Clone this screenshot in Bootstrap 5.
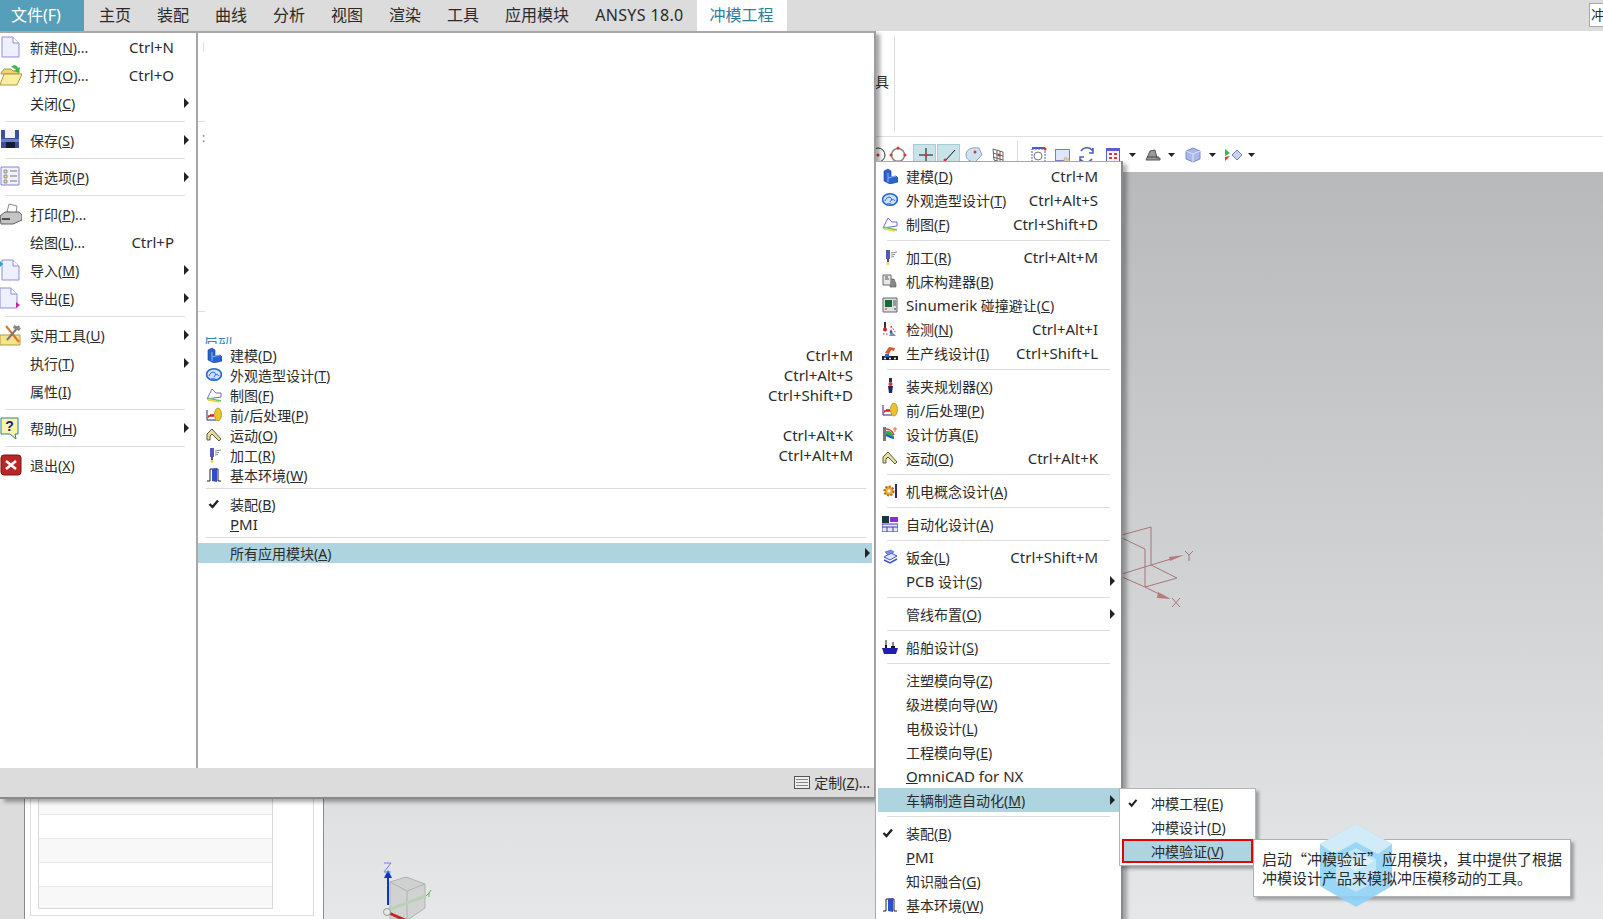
<!DOCTYPE html>
<html lang="zh-CN">
  <head>
    <meta charset="UTF-8" />
    <meta name="viewport" content="width=device-width, initial-scale=1.0" />
    <title>NX 冲模工程</title>
    <link href="https://cdn.jsdelivr.net/npm/bootstrap@5.3.3/dist/css/bootstrap.min.css" rel="stylesheet" />
    <style>
      html, body { height: 919px; overflow: hidden; }
      body { font-family: "Noto Sans", "Noto Sans CJK SC", sans-serif; font-size: 14px; color: #2b2b2b; background: #fff; }
      u { text-underline-offset: 1px; }
      .lat { font-size: 15px; }

      .app-shell { width: 1603px; height: 919px; position: relative; overflow: hidden; }
      .tabbar { height: 31px; background: #dcdcdc; font-size: 16px; line-height: 30px; padding-right: 0; }
      .tab-file { width: 84px; margin-right: 2px; padding-left: 11px; background: #559fba; color: #fff; }
      .tab-item { padding: 0 13px; }
      .tab-item.is-on { background: #fff; color: #2f7f9c; }
      .tab-ansys { letter-spacing: .35px; }
      .tab-corner { width: 14px; height: 24px; margin-top: 3px; background: #fff; border: 1px solid #a9a9a9; border-right: 0; font-size: 14px; line-height: 22px; overflow: hidden; padding-left: 1px; }
      .ribbon { height: 106px; border-bottom: 1px solid #dedede; padding-left: 875px; }
      .ribbon-txt { width: 19px; padding-top: 40px; font-size: 14px; }
      .ribbon-div { width: 1px; height: 96px; margin-top: 5px; background: #dcdcdc; }
      .toolstrip { height: 35px; padding-left: 866px; }
      .work { height: 747px; }
      .nav-gutter { width: 25px; background: #dcdcdc; border-right: 1px solid #8c8c8c; }
      .nav-pane { width: 299px; border-right: 1px solid #8c8c8c; padding: 0 9px 3px 5px; }
      .nav-box { border: 1px solid #dcdcdc; padding: 0 40px 6px 7px; }
      .nav-table { border: 1px solid #d8d8d8; }
      .nav-rowa { height: 24px; background: #f8f8f8; border-bottom: 1px solid #e8e8e8; }
      .nav-rowb { height: 24px; background: #fff; border-bottom: 1px solid #e8e8e8; }
      .nav-rowz { height: 21px; background: #f8f8f8; }
      .gfx { background: linear-gradient(180deg, #b8b9bb 0%, #e6e7e9 100%); }

      .file-panel { position: absolute; left: 0; top: 31px; width: 876px; height: 768px; background: #fff; border-top: 2px solid #a8a8a8; border-right: 2px solid #9c9c9c; border-bottom: 2px solid #8a8a8a; box-shadow: 4px 3px 4px rgba(0,0,0,.35); }
      .file-left { width: 198px; border-right: 2px solid #a8a8a8; }
      .file-right { padding: 0 2px 0 0; }
      .stub-wrap { height: 312px; display: flow-root; }
      .stub-a { width: 1px; height: 10px; margin: 9px 0 0 5px; background: #e8e2d4; }
      .stub-b { width: 7px; height: 1px; margin-top: 69px; background: #dedede; }
      .stub-c { height: 20px; margin: 6px 0 0 4px; font-size: 12px; line-height: 20px; color: #777; }
      .stub-d { width: 7px; height: 1px; margin-top: 163px; background: #dedede; }
      .stub-e { height: 7px; margin: 25px 0 0 6px; overflow: hidden; color: #2f86c5; font-size: 14px; line-height: 9px; }
      .stub-e span { display: block; margin-top: -2px; }
      .panel-foot { height: 29px; background: #dcdcdc; padding-right: 4px; }
      .foot-ico { width: 16px; height: 13px; margin-right: 4px; }

      .mrow { white-space: nowrap; }
      .islot { flex: none; }
      .islot svg { display: block; }
      .hot { margin-left: auto; font-size: 15px; }
      .arw { margin-left: auto; width: 0; height: 0; border-left: 5px solid #222; border-top: 5px solid transparent; border-bottom: 5px solid transparent; }
      .msep { height: 1px; background: #dcdcdc; }
      .sel-band { background: #aed4df; }

      .left-menu .mrow { height: 28px; }
      .left-menu .islot { width: 30px; }
      .left-menu .hot { margin-right: 22px; }
      .left-menu .arw { margin-right: 7px; }
      .left-menu .msep { margin: 4px 11px 4px 5px; }

      .mid-menu .mrow { height: 20px; padding-left: 8px; }
      .mid-menu .islot { width: 24px; }
      .mid-menu .hot { margin-right: 19px; }
      .mid-menu .arw { margin-right: 2px; }
      .mid-menu .msep { margin: 3px 6px 0 8px; }
      .mid-menu .gap-top { margin-top: 5px; }

      .sub-menu { position: absolute; left: 875px; top: 161px; width: 248px; height: 770px; background: #fff; border: 1px solid #a8a8a8; border-right: 2px solid #8a8a8a; box-shadow: 4px 3px 4px rgba(0,0,0,.3); padding: 2px 2px 0 2px; }
      .sub-menu .mrow { height: 24px; padding-left: 4px; }
      .sub-menu .islot { width: 24px; }
      .sub-menu .hot { margin-right: 21px; }
      .sub-menu .arw { margin-right: 4px; }
      .sub-menu .msep { margin: 4px 9px 4px 9px; }
      .sub-menu .islot .tick { margin-left: -2px; }

      .fly-menu { position: absolute; left: 1119px; top: 788px; width: 137px; height: 78px; background: #fff; border: 1px solid #b4b4b4; box-shadow: 3px 3px 3px rgba(0,0,0,.3); padding: 2px 2px 0 2px; }
      .fly-menu .mrow { height: 24px; padding-left: 7px; }
      .fly-menu .islot { width: 22px; }
      .fly-menu .tick { margin-left: -3px; }
      .fly-pick { height: 24px !important; padding-left: 5px !important; border: 2px solid #e60000; background: #aed4df; }
      .tip-box { position: absolute; left: 1253px; top: 839px; width: 318px; height: 58px; background: #fff; border: 1px solid #b0b0b0; box-shadow: 3px 3px 3px rgba(0,0,0,.3); padding: 9px 0 0 8px; font-family: "Noto Sans CJK SC", sans-serif; font-size: 15px; line-height: 19px; white-space: nowrap; }
      .tip-text { position: relative; z-index: 3; }
      .hex-mark { position: absolute; z-index: 2; left: 1318px; top: 824px; width: 76px; height: 83px; pointer-events: none; }
      .axes-a { position: absolute; left: 1122px; top: 520px; width: 90px; height: 100px; }
      .axes-b { position: absolute; left: 375px; top: 855px; width: 60px; height: 64px; }
    </style>
  </head>
  <body>
    <svg width="0" height="0" class="d-none">
      <defs>
        <symbol id="i-doc" viewBox="0 0 22 22"><path d="M2 1h11l6 6v14H2z" fill="#eef0fd" stroke="#8d8de0"/><path d="M13 1v6h6" fill="#fff" stroke="#8d8de0"/></symbol>
        <symbol id="i-open" viewBox="0 0 22 22"><path d="M1 9l3-4h7l2 2h6v3H1z" fill="#e8d67a" stroke="#b09a3a"/><path d="M0 21l4-11h18l-5 11z" fill="#fbeea0" stroke="#b09a3a"/><path d="M11 3c3-3 6-2 7 1l2-1-1 6-5-2 2-1c-1-2-3-2-5-3z" fill="#3bb54a"/></symbol>
        <symbol id="i-save" viewBox="0 0 22 22"><path d="M1 1h18v18H1z" fill="#3d4f9c"/><path d="M5 1h10v8H5z" fill="#f2f2f8"/><path d="M6 13h9v6H6z" fill="#151a35"/><path d="M1 10h18v3H1z" fill="#6d80cc"/></symbol>
        <symbol id="i-pref" viewBox="0 0 22 22"><path d="M1 1h18v18H1z" fill="#f1f1fd" stroke="#8484d8"/><path d="M4 4h3v3H4zM4 9h3v3H4zM4 14h3v3H4z" fill="#f4e35a" stroke="#6a6ab0" stroke-width=".7"/><path d="M10 5h7M10 10h7M10 15h7" stroke="#777"/></symbol>
        <symbol id="i-print" viewBox="0 0 22 22"><path d="M7 9l2-8 8 2-1 7z" fill="#fff" stroke="#888"/><path d="M0 13l5-4h14l3 3v5l-9 4H1z" fill="#c4c4c4" stroke="#5f5f5f"/><path d="M2 15h8v2H2z" fill="#4d4d4d"/></symbol>
        <symbol id="i-imp" viewBox="0 0 22 22"><path d="M2 1h11l6 6v14H2z" fill="#eef0fd" stroke="#8d8de0"/><path d="M13 1v6h6" fill="#fff" stroke="#8d8de0"/><path d="M0 2l3 3-3 3z" fill="#2aa6c6"/></symbol>
        <symbol id="i-exp" viewBox="0 0 22 22"><path d="M0 1h11l6 6v14H0z" fill="#eef0fd" stroke="#8d8de0"/><path d="M11 1v6h6" fill="#fff" stroke="#8d8de0"/><path d="M16 15l4 3-4 3z" fill="#c2249c"/></symbol>
        <symbol id="i-tools" viewBox="0 0 22 22"><path d="M0 11h20v10H0z" fill="#f6e48a" stroke="#b59c3c"/><path d="M6 2l13 16" stroke="#d9702c" stroke-width="2"/><path d="M19 2L7 16" stroke="#777" stroke-width="2"/><path d="M14 1l7 3-2 3-6-3z" fill="#888"/></symbol>
        <symbol id="i-help" viewBox="0 0 22 22"><path d="M1 1h17v16h-3l1 5-6-5H1z" fill="#fdf8a8" stroke="#2b7f9e"/><text x="9.500" y="14" text-anchor="middle" font-family="Liberation Sans" font-weight="700" font-size="14" fill="#14149a">?</text></symbol>
        <symbol id="i-exit" viewBox="0 0 22 22"><rect x="1" y="1" width="20" height="20" rx="3" fill="#b92626" stroke="#7d1515"/><path d="M6 7l10 8M16 7L6 15" stroke="#fff" stroke-width="2.600"/></symbol>
        <symbol id="i-model" viewBox="0 0 16 16"><path d="M2 3l4-2 3 2v6l5-1 2 2v4l-8 2-6-3z" fill="#2a62cf" stroke="#163d92" stroke-width=".6"/><path d="M6 5v9M6 10l8-2" stroke="#8db4f3"/></symbol>
        <symbol id="i-shape" viewBox="0 0 16 16"><ellipse cx="8" cy="7.500" rx="7.400" ry="5.800" fill="#cfe0fb" stroke="#2464d8" stroke-width="1.600"/><path d="M3 9c2-5 6-5 7-1M8 10c1-3 4-3 5-1M5 12c2-1 4 0 6 1" fill="none" stroke="#2464d8"/></symbol>
        <symbol id="i-draft" viewBox="0 0 16 16"><path d="M1 12L6 2l4 4h5v4z" fill="#fff" stroke="#6a6ad8"/><path d="M1 11l14 3" stroke="#6fc16a" stroke-width="1.600"/><path d="M2 13l11 2" stroke="#e9d33f" stroke-width="1.400"/></symbol>
        <symbol id="i-post" viewBox="0 0 16 16"><path d="M1 3v10h9" fill="none" stroke="#22228a"/><path d="M2 11l1-3 1 2 1-3 1 3 1-3 1 3" fill="none" stroke="#d62222"/><ellipse cx="12" cy="7.500" rx="3.500" ry="6.500" fill="#edc32a" stroke="#8f741a" stroke-width=".6"/></symbol>
        <symbol id="i-motion" viewBox="0 0 16 16"><path d="M1 13V7l5-5 9 10-2 2-7-7-2 2v4z" fill="#e6dca0" stroke="#5f5a3a"/></symbol>
        <symbol id="i-mfg" viewBox="0 0 16 16"><path d="M4 1h4v9H4z" fill="#5858b8"/><path d="M5 10h2v3H5z" fill="#555"/><path d="M9 4l6-1M9 6l4-.5M9 8l3-.5" stroke="#8a8a8a"/><circle cx="6" cy="14.500" r="1.500" fill="#f1d34a"/></symbol>
        <symbol id="i-gate" viewBox="0 0 16 16"><path d="M1 14h3V2h8v12h3" fill="none" stroke="#222"/><path d="M6 2l5-1v14l-5-1z" fill="#2f4ec8"/></symbol>
        <symbol id="i-mach" viewBox="0 0 16 16"><path d="M1 2h8v10H1z" fill="#e8e8e8" stroke="#666"/><path d="M9 6h3l2 5v3H8v-2" fill="#888" stroke="#555" stroke-width=".6"/><path d="M3 4h3M3 6h4" stroke="#555"/></symbol>
        <symbol id="i-sinu" viewBox="0 0 16 16"><path d="M1 1h14v14H1z" fill="#dedede" stroke="#666"/><path d="M3 3h7v7H3z" fill="#176b38"/><path d="M11 4h3M11 6h3M11 8h3" stroke="#555"/><path d="M3 12h2" stroke="#c33"/><path d="M12 12h2" stroke="#333"/></symbol>
        <symbol id="i-insp" viewBox="0 0 16 16"><path d="M3 1v6" stroke="#333" stroke-width="2"/><circle cx="3" cy="8.500" r="2" fill="#d82020"/><path d="M1 13h6M9 13V5M9 5l5 7" stroke="#d82020" stroke-dasharray="1.500 1.500" fill="none"/><path d="M7 15l3-4 4 4z" fill="#8a8a9c"/><circle cx="9" cy="11" r="1.400" fill="#2464d8"/></symbol>
        <symbol id="i-line" viewBox="0 0 16 16"><path d="M3 8l4-6 6 1-1 3-3-1-2 4z" fill="#d4572a"/><path d="M0 11h16v4H0z" fill="#1d1d1d"/><path d="M3 9h4v3H3z" fill="#2464d8"/><circle cx="3" cy="13.500" r="1" fill="#fff"/><circle cx="8" cy="13.500" r="1" fill="#fff"/><circle cx="13" cy="13.500" r="1" fill="#fff"/></symbol>
        <symbol id="i-fix" viewBox="0 0 16 16"><path d="M7 0h3v4H7z" fill="#333"/><circle cx="8.500" cy="6" r="2" fill="#c33"/><path d="M6 8h5l-1 7H7z" fill="#23235e"/></symbol>
        <symbol id="i-sim" viewBox="0 0 16 16"><path d="M1 1h3v14H1z" fill="#777"/><path d="M4 5c4-1 7 2 8 6-3 1-6-1-8-2z" fill="#2cb24a"/><path d="M4 3c4 0 7 3 8 6" fill="none" stroke="#e23030" stroke-width="1.500"/><path d="M4 9c3 1 5 3 8 3" fill="none" stroke="#2a52d8" stroke-width="2"/><path d="M13 1v5M11 3h4" stroke="#ea6a1a"/></symbol>
        <symbol id="i-mech" viewBox="0 0 16 16"><circle cx="7" cy="8" r="4.500" fill="#edaa3a" stroke="#b66b12" stroke-width="2.200" stroke-dasharray="2 1.400"/><circle cx="7" cy="8" r="1.600" fill="#fff"/><path d="M14 1v14" stroke="#2b2b70" stroke-width="2"/></symbol>
        <symbol id="i-auto" viewBox="0 0 16 16"><path d="M0 0h7v7H0z" fill="#17343f"/><path d="M8 1h8v5H8z" fill="#8a2ad8"/><path d="M0 8h16v8H0z" fill="#e6e6fa" stroke="#3d3daa"/><path d="M0 11h16M5 11v5M11 11v5" stroke="#3d3daa"/></symbol>
        <symbol id="i-sheet" viewBox="0 0 16 16"><path d="M2 8l7-4 6 3-7 4z" fill="#dde4fb" stroke="#3a4fc8"/><path d="M2 11l6 3 7-4" fill="none" stroke="#3a4fc8" stroke-width="1.500"/><path d="M3 3l6-2 3 2-6 3z" fill="#7d90e6" stroke="#3a4fc8" stroke-width=".6"/></symbol>
        <symbol id="i-ship" viewBox="0 0 16 16"><path d="M0 9h16l-2 6H2z" fill="#2020a8"/><path d="M3 6h2v3H3zM9 7h4v2H9z" fill="#1a1a1a"/><path d="M4 1v5M11 3v4" stroke="#1a1a1a"/></symbol>
        <symbol id="i-chk" viewBox="0 0 16 16"><path d="M3.500 8l3 3 5.500-6.500" fill="none" stroke="#222" stroke-width="2.400"/></symbol>
      </defs>
    </svg>

    <div class="app-shell">
      <div class="tabbar d-flex">
        <div class="tab-file">文件(F)</div>
        <div class="tab-item">主页</div>
        <div class="tab-item">装配</div>
        <div class="tab-item">曲线</div>
        <div class="tab-item">分析</div>
        <div class="tab-item">视图</div>
        <div class="tab-item">渲染</div>
        <div class="tab-item">工具</div>
        <div class="tab-item">应用模块</div>
        <div class="tab-item tab-ansys">ANSYS 18.0</div>
        <div class="tab-item is-on">冲模工程</div>
        <div class="tab-corner ms-auto">冲</div>
      </div>

      <div class="ribbon d-flex">
        <div class="ribbon-txt">具</div>
        <div class="ribbon-div"></div>
      </div>

      <div class="toolstrip">
        <svg width="400" height="35" viewBox="866 137 400 35" fill="none">
          <circle cx="878" cy="155" r="7" stroke="#333"/><circle cx="878" cy="155" r="1.500" fill="#d33"/>
          <circle cx="898" cy="155" r="6.500" stroke="#888" stroke-width="1.500"/><circle cx="898" cy="148" r="1.500" fill="#d33"/><circle cx="891" cy="155" r="1.500" fill="#d33"/><circle cx="905" cy="155" r="1.500" fill="#d33"/><circle cx="898" cy="162" r="1.500" fill="#d33"/>
          <rect x="913.500" y="144.500" width="22" height="24" fill="#c9e3e9" stroke="#a5ced8"/><path d="M919 155h14M926 148v14" stroke="#111"/><circle cx="926" cy="155" r="1.500" fill="#d33"/>
          <rect x="937.500" y="144.500" width="22" height="24" fill="#c9e3e9" stroke="#a5ced8"/><path d="M945 161l10-11" stroke="#111"/><circle cx="945" cy="160" r="1.500" fill="#d33"/>
          <path d="M966 155c0-6 6-8 13-7l3 7-7 7c-5 0-9-3-9-7z" fill="#cfe2f2" stroke="#8fa6b8"/><circle cx="975" cy="152" r="1.500" fill="#d33"/>
          <path d="M993 149l10 3v11l-9-3zM993 153l10 3M993 157l10 3M997 150v11M1000 151v11" stroke="#444" stroke-width=".8"/><circle cx="999" cy="155" r="1.500" fill="#d33"/>
          <path d="M1017.500 141v26" stroke="#dcdcdc"/>
          <rect x="1032" y="149" width="13" height="13" stroke="#4a5cd0" stroke-dasharray="2 1"/><rect x="1032" y="147" width="13" height="2" fill="#4a5cd0"/><circle cx="1038" cy="156" r="4" stroke="#777"/><circle cx="1045" cy="149" r="1.500" fill="#d33"/>
          <rect x="1055.500" y="149.500" width="14" height="11" fill="#dfe6f5" stroke="#7484c8"/><path d="M1063 163l2-6 4 2 1 4z" fill="#e8c9a0" stroke="#c4a070" stroke-width=".5"/>
          <path d="M1081 151a7 7 0 0 1 11-1l1-2v5h-4M1092 159a7 7 0 0 1-11 1l-1 2v-5h4" stroke="#4a5fb8" stroke-width="1.500"/>
          <rect x="1106.500" y="148.500" width="13" height="13" fill="#f2f2ff" stroke="#5c5cd0"/><rect x="1106" y="148" width="14" height="3" fill="#5c5cd0"/><path d="M1109 153h3v2h-3zM1114 153h3v2h-3zM1109 157h3v2h-3zM1114 157h3v2h-3z" fill="#d33"/>
          <path d="M1129 153h7l-3.500 4z" fill="#222"/>
          <path d="M1146 160l4-9 5-1 2 8h3v2z" fill="#999" stroke="#555"/><path d="M1147 157h12" stroke="#444"/>
          <path d="M1168 153h7l-3.500 4z" fill="#222"/>
          <path d="M1186 151l7-3 7 3v8l-7 3-7-3z" fill="#a9b8ea" stroke="#7b8ccc"/><path d="M1186 151l7 3 7-3M1193 154v8" stroke="#dbe2f9"/>
          <path d="M1209 153h7l-3.500 4z" fill="#222"/>
          <path d="M1225 149l5 4-5 3z" fill="#3bb54a"/><path d="M1225 157l5-1-5 5z" fill="#d33"/><path d="M1232 155l5-5 5 5-5 5z" fill="#c9d2ef" stroke="#7080c0"/>
          <path d="M1248 153h7l-3.500 4z" fill="#222"/>
        </svg>
      </div>

      <div class="work d-flex">
        <div class="nav-gutter"></div>
        <div class="nav-pane d-flex flex-column justify-content-end">
          <div class="nav-box">
            <div class="nav-table">
              <div class="nav-rowa"></div>
              <div class="nav-rowb"></div>
              <div class="nav-rowa"></div>
              <div class="nav-rowb"></div>
              <div class="nav-rowz"></div>
            </div>
          </div>
        </div>
        <div class="gfx flex-grow-1"></div>
      </div>

      <svg class="axes-a" viewBox="1122 520 90 100" fill="none">
        <g stroke="#a87676" stroke-width="1">
          <path d="M1122 535l29-8v38M1122 538l23 11v38M1122 574l29-9 26 13-32 9-23-10"/>
          <path d="M1151 565l20-6M1145 587l16 8"/>
        </g>
        <path d="M1169 557l15-2-14 6z" fill="#b77a7a"/><path d="M1158 592l13 7-14-1z" fill="#b77a7a"/>
        <path d="M1185 551l4 4 4-4M1189 555v6M1172 598l8 9M1180 598l-8 9" stroke="#a87676"/>
      </svg>
      <svg class="axes-b" viewBox="375 855 60 64" fill="none">
        <path d="M390 882l16-5 19 7v24l-16 11h-19z" fill="#c8cac8" fill-opacity=".7" stroke="#b0b2b0"/><path d="M390 882l17 9 18-7M407 891v28" stroke="#b0b2b0"/>
        <path d="M388 910l38-14" stroke="#b8d2b8" stroke-width="3"/>
        <path d="M388 905v-30" stroke="#0c36c8" stroke-width="2"/><path d="M384 878l4-8 4 8z" fill="#0c36c8"/>
        <path d="M384 863h7l-7 9h7" stroke="#6a82e8"/>
        <path d="M426 896l3-3 2-3M429 893v4" stroke="#58b058"/>
        <path d="M389 913l18 8" stroke="#c62424" stroke-width="3"/><circle cx="387" cy="912" r="3.500" fill="#e8e8e8" stroke="#999"/>
      </svg>

      <!-- 文件菜单 -->
      <div class="file-panel d-flex flex-column">
        <div class="d-flex flex-grow-1">
          <div class="file-left left-menu">
            <div class="mrow d-flex align-items-center"><span class="islot"><svg width="22" height="22"><use href="#i-doc"/></svg></span>新建(<u>N</u>)...<span class="hot">Ctrl+N</span></div>
            <div class="mrow d-flex align-items-center"><span class="islot"><svg width="22" height="22"><use href="#i-open"/></svg></span>打开(<u>O</u>)...<span class="hot">Ctrl+O</span></div>
            <div class="mrow d-flex align-items-center"><span class="islot"></span>关闭(<u>C</u>)<i class="arw"></i></div>
            <div class="msep"></div>
            <div class="mrow d-flex align-items-center"><span class="islot"><svg width="22" height="22"><use href="#i-save"/></svg></span>保存(<u>S</u>)<i class="arw"></i></div>
            <div class="msep"></div>
            <div class="mrow d-flex align-items-center"><span class="islot"><svg width="22" height="22"><use href="#i-pref"/></svg></span>首选项(<u>P</u>)<i class="arw"></i></div>
            <div class="msep"></div>
            <div class="mrow d-flex align-items-center"><span class="islot"><svg width="22" height="22"><use href="#i-print"/></svg></span>打印(<u>P</u>)...</div>
            <div class="mrow d-flex align-items-center"><span class="islot"></span>绘图(<u>L</u>)...<span class="hot">Ctrl+P</span></div>
            <div class="mrow d-flex align-items-center"><span class="islot"><svg width="22" height="22"><use href="#i-imp"/></svg></span>导入(<u>M</u>)<i class="arw"></i></div>
            <div class="mrow d-flex align-items-center"><span class="islot"><svg width="22" height="22"><use href="#i-exp"/></svg></span>导出(<u>E</u>)<i class="arw"></i></div>
            <div class="msep"></div>
            <div class="mrow d-flex align-items-center"><span class="islot"><svg width="22" height="22"><use href="#i-tools"/></svg></span>实用工具(<u>U</u>)<i class="arw"></i></div>
            <div class="mrow d-flex align-items-center"><span class="islot"></span>执行(<u>T</u>)<i class="arw"></i></div>
            <div class="mrow d-flex align-items-center"><span class="islot"></span>属性(<u>I</u>)</div>
            <div class="msep"></div>
            <div class="mrow d-flex align-items-center"><span class="islot"><svg width="22" height="22"><use href="#i-help"/></svg></span>帮助(<u>H</u>)<i class="arw"></i></div>
            <div class="msep"></div>
            <div class="mrow d-flex align-items-center"><span class="islot"><svg width="22" height="22"><use href="#i-exit"/></svg></span>退出(<u>X</u>)</div>
          </div>

          <div class="file-right flex-grow-1">
            <div class="stub-wrap">
              <div class="stub-a"></div>
              <div class="stub-b"></div>
              <div class="stub-c">:</div>
              <div class="stub-d"></div>
              <div class="stub-e"><span>启动</span></div>
            </div>
            <div class="mid-menu">
              <div class="mrow d-flex align-items-center"><span class="islot"><svg width="16" height="16"><use href="#i-model"/></svg></span>建模(<u>D</u>)<span class="hot">Ctrl+M</span></div>
              <div class="mrow d-flex align-items-center"><span class="islot"><svg width="16" height="16"><use href="#i-shape"/></svg></span>外观造型设计(<u>T</u>)<span class="hot">Ctrl+Alt+S</span></div>
              <div class="mrow d-flex align-items-center"><span class="islot"><svg width="16" height="16"><use href="#i-draft"/></svg></span>制图(<u>F</u>)<span class="hot">Ctrl+Shift+D</span></div>
              <div class="mrow d-flex align-items-center"><span class="islot"><svg width="16" height="16"><use href="#i-post"/></svg></span>前/后处理(<u>P</u>)</div>
              <div class="mrow d-flex align-items-center"><span class="islot"><svg width="16" height="16"><use href="#i-motion"/></svg></span>运动(<u>O</u>)<span class="hot">Ctrl+Alt+K</span></div>
              <div class="mrow d-flex align-items-center"><span class="islot"><svg width="16" height="16"><use href="#i-mfg"/></svg></span>加工(<u>R</u>)<span class="hot">Ctrl+Alt+M</span></div>
              <div class="mrow d-flex align-items-center"><span class="islot"><svg width="16" height="16"><use href="#i-gate"/></svg></span>基本环境(<u>W</u>)</div>
              <div class="msep"></div>
              <div class="mrow d-flex align-items-center gap-top"><span class="islot"><svg width="16" height="16"><use href="#i-chk"/></svg></span>装配(<u>B</u>)</div>
              <div class="mrow d-flex align-items-center"><span class="islot"></span><span class="lat"><u>P</u>MI</span></div>
              <div class="msep"></div>
              <div class="mrow sel-band d-flex align-items-center gap-top"><span class="islot"></span>所有应用模块(<u>A</u>)<i class="arw"></i></div>
            </div>
          </div>
        </div>
        <div class="panel-foot d-flex align-items-center justify-content-end">
          <svg class="foot-ico" viewBox="0 0 16 13" fill="none"><rect x=".5" y=".5" width="15" height="12" fill="#efefef" stroke="#555"/><path d="M2 3.500h12M2 6.500h12M2 9.500h12" stroke="#888"/></svg>
          <span>定制(<u>Z</u>)...</span>
        </div>
      </div>

      <!-- 所有应用模块 -->
      <div class="sub-menu">
        <div class="mrow d-flex align-items-center"><span class="islot"><svg width="16" height="16"><use href="#i-model"/></svg></span>建模(<u>D</u>)<span class="hot">Ctrl+M</span></div>
        <div class="mrow d-flex align-items-center"><span class="islot"><svg width="16" height="16"><use href="#i-shape"/></svg></span>外观造型设计(<u>T</u>)<span class="hot">Ctrl+Alt+S</span></div>
        <div class="mrow d-flex align-items-center"><span class="islot"><svg width="16" height="16"><use href="#i-draft"/></svg></span>制图(<u>F</u>)<span class="hot">Ctrl+Shift+D</span></div>
        <div class="msep"></div>
        <div class="mrow d-flex align-items-center"><span class="islot"><svg width="16" height="16"><use href="#i-mfg"/></svg></span>加工(<u>R</u>)<span class="hot">Ctrl+Alt+M</span></div>
        <div class="mrow d-flex align-items-center"><span class="islot"><svg width="16" height="16"><use href="#i-mach"/></svg></span>机床构建器(<u>B</u>)</div>
        <div class="mrow d-flex align-items-center"><span class="islot"><svg width="16" height="16"><use href="#i-sinu"/></svg></span><span class="lat">Sinumerik</span>&nbsp;碰撞避让(<u>C</u>)</div>
        <div class="mrow d-flex align-items-center"><span class="islot"><svg width="16" height="16"><use href="#i-insp"/></svg></span>检测(<u>N</u>)<span class="hot">Ctrl+Alt+I</span></div>
        <div class="mrow d-flex align-items-center"><span class="islot"><svg width="16" height="16"><use href="#i-line"/></svg></span>生产线设计(<u>I</u>)<span class="hot">Ctrl+Shift+L</span></div>
        <div class="msep"></div>
        <div class="mrow d-flex align-items-center"><span class="islot"><svg width="16" height="16"><use href="#i-fix"/></svg></span>装夹规划器(<u>X</u>)</div>
        <div class="mrow d-flex align-items-center"><span class="islot"><svg width="16" height="16"><use href="#i-post"/></svg></span>前/后处理(<u>P</u>)</div>
        <div class="mrow d-flex align-items-center"><span class="islot"><svg width="16" height="16"><use href="#i-sim"/></svg></span>设计仿真(<u>E</u>)</div>
        <div class="mrow d-flex align-items-center"><span class="islot"><svg width="16" height="16"><use href="#i-motion"/></svg></span>运动(<u>O</u>)<span class="hot">Ctrl+Alt+K</span></div>
        <div class="msep"></div>
        <div class="mrow d-flex align-items-center"><span class="islot"><svg width="16" height="16"><use href="#i-mech"/></svg></span>机电概念设计(<u>A</u>)</div>
        <div class="msep"></div>
        <div class="mrow d-flex align-items-center"><span class="islot"><svg width="16" height="16"><use href="#i-auto"/></svg></span>自动化设计(<u>A</u>)</div>
        <div class="msep"></div>
        <div class="mrow d-flex align-items-center"><span class="islot"><svg width="16" height="16"><use href="#i-sheet"/></svg></span>钣金(<u>L</u>)<span class="hot">Ctrl+Shift+M</span></div>
        <div class="mrow d-flex align-items-center"><span class="islot"></span><span class="lat">PCB</span>&nbsp;设计(<u>S</u>)<i class="arw"></i></div>
        <div class="msep"></div>
        <div class="mrow d-flex align-items-center"><span class="islot"></span>管线布置(<u>O</u>)<i class="arw"></i></div>
        <div class="msep"></div>
        <div class="mrow d-flex align-items-center"><span class="islot"><svg width="16" height="16"><use href="#i-ship"/></svg></span>船舶设计(<u>S</u>)</div>
        <div class="msep"></div>
        <div class="mrow d-flex align-items-center"><span class="islot"></span>注塑模向导(<u>Z</u>)</div>
        <div class="mrow d-flex align-items-center"><span class="islot"></span>级进模向导(<u>W</u>)</div>
        <div class="mrow d-flex align-items-center"><span class="islot"></span>电极设计(<u>L</u>)</div>
        <div class="mrow d-flex align-items-center"><span class="islot"></span>工程模向导(<u>E</u>)</div>
        <div class="mrow d-flex align-items-center"><span class="islot"></span><span class="lat"><u>O</u>mniCAD for NX</span></div>
        <div class="mrow sel-band d-flex align-items-center"><span class="islot"></span>车辆制造自动化(<u>M</u>)<i class="arw"></i></div>
        <div class="msep"></div>
        <div class="mrow d-flex align-items-center"><span class="islot"><svg class="tick" width="16" height="16"><use href="#i-chk"/></svg></span>装配(<u>B</u>)</div>
        <div class="mrow d-flex align-items-center"><span class="islot"></span><span class="lat"><u>P</u>MI</span></div>
        <div class="mrow d-flex align-items-center"><span class="islot"></span>知识融合(<u>G</u>)</div>
        <div class="mrow d-flex align-items-center"><span class="islot"><svg width="16" height="16"><use href="#i-gate"/></svg></span>基本环境(<u>W</u>)</div>
      </div>

      <!-- 车辆制造自动化 -->
      <div class="fly-menu">
        <div class="mrow d-flex align-items-center"><span class="islot"><svg class="tick" width="14" height="14"><use href="#i-chk"/></svg></span>冲模工程(<u>E</u>)</div>
        <div class="mrow d-flex align-items-center"><span class="islot"></span>冲模设计(<u>D</u>)</div>
        <div class="mrow fly-pick d-flex align-items-center"><span class="islot"></span>冲模验证(<u>V</u>)</div>
      </div>

      <div class="tip-box"><span class="tip-text">启动“冲模验证”应用模块，其中提供了根据<br />冲模设计产品来模拟冲压模移动的工具。</span></div>

      <svg class="hex-mark" viewBox="0 0 76 83">
        <path d="M38 0l36 20v42L38 83 2 62V20z" fill="#8fd2f7" fill-opacity=".9"/>
        <path d="M38 0l36 20-14 10-22-12-22 12L2 20z" fill="#dceef8" fill-opacity=".85"/>
        <path d="M38 24l20 11v22L38 68 18 57V35z" fill="#fff" fill-opacity=".4"/>
        <path d="M38 38l10-6 8 5-18 10-18-10 8-5z" fill="#fff" fill-opacity=".45"/>
      </svg>
    </div>

    <script src="https://cdn.jsdelivr.net/npm/bootstrap@5.3.3/dist/js/bootstrap.bundle.min.js"></script>
  </body>
</html>
